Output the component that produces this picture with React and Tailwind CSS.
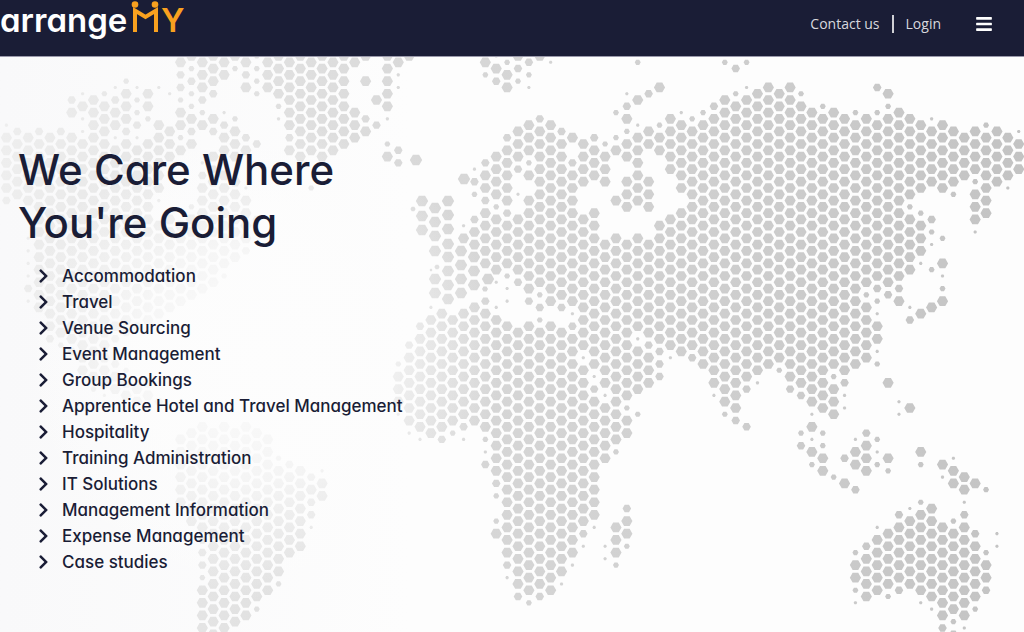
import { FaBars, FaChevronRight } from 'react-icons/fa';

const services = [
  'Accommodation',
  'Travel',
  'Venue Sourcing',
  'Event Management',
  'Group Bookings',
  'Apprentice Hotel and Travel Management',
  'Hospitality',
  'Training Administration',
  'IT Solutions',
  'Management Information',
  'Expense Management',
  'Case studies',
];

// One entry per map column, west to east. "12-20" is a run of full cells
// (every second row), a trailing letter is a single smaller cell.
const columns = [
  '10d 12-20 22b',
  '11b 13-21',
  '12-22 28d 30d 32d 34d 36b 38d',
  '11b 13-39',
  '12-42 44b',
  '11b 13-43 45c',
  '6b 8 12-44 46b',
  '5d 7 9d 11d 13-49',
  '6-50 52c',
  '5c 7-51 53d',
  '4d 6b 8 10 12d 14-42 44b 48b 50-52',
  '3c 5-9 11b 13-41 43b 49c 51-53',
  '4d 6c 8c 10b 12d 14-40 42b 52-54',
  '5 7 9c 13-41 51 53 55b',
  '4d 10-20 22d 26-40 54b',
  '5d 11-15 25-39',
  '0 2b 4b 6c 8-10 12c 14 26-38 60-70',
  '-1 1c 3b 5c 7c 9 11b 13 23c 25-37 59-73',
  '0-4 6b 8c 10 16d 18b 20-36 58-74 76b 78b 80b 82c 84-90',
  '-1 1 3 5b 9 11b 15 17b 19-35 59-91',
  '0 2 8d 10b 12-14 18-32 34c 58-90',
  '-1 1c 9c 11-15 19-31 59-89',
  '0 2b 4 12b 14 20d 22-28 30b 58-88',
  '-1c 1c 3c 5c 13b 25b 59-85 87c',
  '0-4 60-84',
  '-1 1-5 7c 9d 63c 65-81 83c',
  '0-10 12b 14 64b 66-78',
  '-1 1-15 65-77',
  '0-14 20c 66b 68 70b 72b 74d',
  '-1 1-15 65d 67-69',
  '0-14',
  '-1 1-13',
  '0 8-12',
  '-1 3 9b 11',
  '6 10b',
  '-1 1-7 9d 13c 15',
  '0 2d 4d 14b 16b 48c 50-54 56d',
  '-1 45b 47-57 59d',
  '42b 44-58 60d',
  '39d 41-59',
  '40-58 60b',
  '41-57 59c',
  '26d 28 40-56 58b 60d',
  '17d 19b 21c 25b 27-31 39-57',
  '0 2c 16b 18-20 22b 24-32 38b 40-58 60c 62d 64b',
  '-1d 1 3b 15-21 23c 25-33 35d 39d 41-65 67b 69c 73c 75',
  '0c 2-4 12b 14-22 24b 26-32 34c 36d 38d 42-78 80b 82d',
  '-1 1b 3c 11-15 17b 21d 25-33 35b 43-83 85b',
  '0b 2c 4d 10-14 16c 18 22-36 38b 42-84 86c',
  '-1 9b 11-35 37c 39b 41c 43-83 85b',
  '0d 10-38 42-84',
  '11b 13-37 39b 43-81 83d',
  '12 16b 18-38 40d 42b 44-78 80d',
  '13-19 25-45 47d 49-73 75b 77d',
  '12b 14-18 24-48 50d 52b 54-72 74d',
  '13c 15-19 29-51 53d 55-63 77d 79d',
  '8c 12c 14 22 28-60 62c 74-78 80c',
  '5d 7b 9 11c 13-15 19-23 29-53 55c 57-59 71b 73-75 77c',
  '0c 6 10d 12-22 28-42 44d 46-52 56c',
  '5b 11-13 19-23 29-43 45b 47-51',
  '4 10c 12-14 26-44 46b 48b 50b',
  '9-17 25-45 47d',
  '8d 10-20 24-46',
  '9c 11-45 47b',
  '8c 10-48',
  '7b 9-51 53d',
  '0c 6-54 56c',
  '1b 5c 7-55 57b',
  '0c 4d 6-50 52b 58b',
  '5-49 51d',
  '4-48',
  '5-47 49c',
  '4-50 52b',
  '5c 7-51 53b 59c 61b',
  '8-54 56d 58 60d 62 64c',
  '7c 9-55 59c 61c 63-65',
  '8-48 50c 52-56 66c',
  '9-49 51b 53d 55d 63b 67',
  '8c 10-48 60d 62-64 68b 78c 80-82 84c 86d',
  '9-35 37c 39-47 59b 61-65 77b 79-85',
  '4b 8c 10-34 36b 38c 40d 42-44 46d 48c 60c 62d 64c 74d 76-84',
  '5 7c 9-35 37b 51 63 65c 75-83 85c',
  '8-34 36b 38 54d 56d 72b 74-82 84b',
  '9-21 23c 25-33 39d 41b 55 71d 73-83',
  '10-20 24c 26-30 32d 40 62 64c 70c 72-84 86d',
  '9d 11-19 25b 27c 29d 33c 39 71-85 87d',
  '10-20 28c 32 34d 36c 38 64 66d 74-88 90b',
  '11-19 21c 63d 65-67 73c 75-87 89c 91b',
  '12-18 66-68 70d 72b 74-88 90d',
  '11-17 19c 21-25 27d 67 75b 77-85 87c',
  '10c 12-24 68c 78c 80-82 84b',
  '11-19 75d 77d',
  '12-18 20d',
  '11d 13-17',
];

// The western edge of Europe sits on a slightly wider grid
const westEurope = [
  [416, 160, 6.2], [464, 179, 6.2], [413, 209, 2.6],
  [422, 201, 6.2], [422, 216, 6.2], [422, 230, 6.2],
  [435, 208, 6.2], [435, 222, 6.2], [435, 236, 6.2], [435, 251, 6.2],
  [448, 201, 6.2], [448, 215, 6.2], [448, 229, 6.2], [448, 244, 6.2], [448, 257, 6.2],
  [461, 251, 6.2], [461, 265, 6.2], [461, 279, 6.2], [461, 293, 6.2],
  [431, 270, 1.4], [437, 267, 2.6], [435, 279, 6.2], [435, 293, 6.2],
  [448, 271, 6.2], [448, 285, 6.2], [448, 299, 6.2],
  [474, 257, 6.2], [474, 271, 6.2], [474, 285, 6.2],
  [488, 279, 6.2], [485, 289, 3],
];

const radius = { a: 5.6, b: 4.3, c: 3, d: 1.8 };

function hexagon(x, y, r) {
  const h = r * 0.866;
  const w = r / 2;
  return `M${x - r} ${y}L${x - w} ${y - h}H${x + w}L${x + r} ${y}L${x + w} ${y + h}H${x - w}Z`;
}

function buildMap() {
  const cells = westEurope.map(([x, y, r]) => hexagon(x, y, r));
  columns.forEach((column, i) => {
    const x = 6.4 + i * 10.885;
    column.split(' ').forEach((token) => {
      const [, from, to, size] = token.match(/^(-?\d+)(?:-(\d+))?([bcd])?$/);
      for (let j = Number(from); j <= Number(to ?? from); j += 2) {
        cells.push(hexagon(x, 62.3 + j * 6.285, radius[size ?? 'a']));
      }
    });
  });
  return cells.join('');
}

const mapPath = buildMap();

function WorldMap() {
  return (
    <svg
      aria-hidden="true"
      className="absolute inset-0 w-full h-full"
      viewBox="0 57 1024 575"
      preserveAspectRatio="xMidYMin slice"
    >
      <defs>
        <linearGradient id="land" gradientUnits="userSpaceOnUse" x1="0" y1="0" x2="1024" y2="0">
          <stop offset="0" stopColor="#eeeeee" />
          <stop offset="0.2" stopColor="#e4e4e4" />
          <stop offset="0.42" stopColor="#d8d8d8" />
          <stop offset="0.68" stopColor="#cfcfcf" />
          <stop offset="1" stopColor="#c3c3c3" />
        </linearGradient>
        <radialGradient id="glow" gradientUnits="userSpaceOnUse" cx="260" cy="360" r="240">
          <stop offset="0" stopColor="#fdfdfd" stopOpacity="0.95" />
          <stop offset="0.5" stopColor="#fdfdfd" stopOpacity="0.7" />
          <stop offset="1" stopColor="#fdfdfd" stopOpacity="0" />
        </radialGradient>
      </defs>
      <path d={mapPath} fill="url(#land)" />
      <circle cx="260" cy="360" r="240" fill="url(#glow)" />
    </svg>
  );
}

function Logo() {
  return (
    <a href="#" aria-label="arrangeMY" className="block">
      <svg width="186" height="44" viewBox="0 0 186 44" className="block">
        <text
          x="0"
          y="32"
          fill="#fff"
          fontSize="33"
          className="font-['Inter',sans-serif] font-semibold [font-feature-settings:'cv11']"
        >
          arrange
        </text>
        <path
          d="M135 32V10.5L145.5 17L156 10.5V32"
          fill="none"
          stroke="#f9a11f"
          strokeWidth="4"
        />
        <circle cx="135" cy="4.5" r="3.3" fill="#f9a11f" />
        <circle cx="155" cy="4.5" r="3.3" fill="#f9a11f" />
        <text
          x="161"
          y="32"
          fill="#f9a11f"
          fontSize="33"
          className="font-['Inter',sans-serif] font-semibold"
        >
          Y
        </text>
      </svg>
    </a>
  );
}

function Header() {
  return (
    <header className="flex items-start justify-between h-[57px] bg-[#1a1d36] border-b border-[#9a99ab]">
      <Logo />
      <nav className="flex items-center h-12 pr-8 font-['Open_Sans',sans-serif] text-sm text-[#d8d8de]">
        <a href="#contact">Contact us</a>
        <span className="w-0.5 h-[18px] mx-3 bg-[#d0d0d5]" />
        <a href="#login">Login</a>
        <button type="button" aria-label="Menu" className="ml-[35px] text-white">
          <FaBars className="w-4 h-[18px]" />
        </button>
      </nav>
    </header>
  );
}

function App() {
  return (
    <div className="flex flex-col min-h-screen bg-[#fdfdfd] font-['Inter',sans-serif] text-[#1a1d36] [font-feature-settings:'cv11']">
      <Header />
      <main className="relative flex-1 bg-linear-to-r from-[#f9f9fa] to-[#fdfdfd] to-40%">
        <WorldMap />
        <section className="relative px-[18px] pt-[86px] pb-12">
          <h1 className="text-[42px] leading-[53px] font-medium">
            We Care Where
            <br />
            You&apos;re Going
          </h1>
          <ul className="mt-3.5 pl-5 text-[17px] leading-[26px] font-medium">
            {services.map((service) => (
              <li key={service} className="flex items-center gap-[13px]">
                <FaChevronRight className="w-[11px] h-4" />
                {service}
              </li>
            ))}
          </ul>
        </section>
      </main>
    </div>
  );
}

export default App;
